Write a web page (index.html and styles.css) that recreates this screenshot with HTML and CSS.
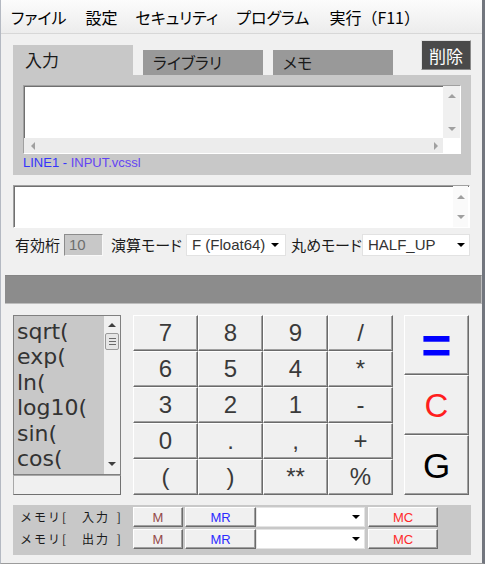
FILE: index.html
```html
<!DOCTYPE html>
<html lang="ja">
<head>
<meta charset="utf-8">
<title>Calculator</title>
<link rel="stylesheet" href="styles.css">
</head>
<body>
<div class="window">
  <div class="menubar">
    <span class="menu m1">ファイル</span>
    <span class="menu m2">設定</span>
    <span class="menu m3">セキュリティ</span>
    <span class="menu m4">プログラム</span>
    <span class="menu m5">実行（F11）</span>
  </div>

  <div class="tabrow">
    <div class="tab active">入力</div>
    <div class="tab">ライブラリ</div>
    <div class="tab">メモ</div>
    <button class="del">削除</button>
  </div>

  <div class="panel">
    <div class="editor">
      <div class="edit-area"></div>
      <div class="vscroll"><i class="arr up"></i><i class="arr down"></i></div>
      <div class="hscroll"><i class="arr left"></i><i class="arr right"></i></div>
      <div class="corner"></div>
    </div>
    <div class="fileline"><span class="l1">LINE1 - </span><span class="l2">INPUT.vcssl</span></div>
  </div>

  <div class="output">
    <div class="edit-area"></div>
    <div class="vscroll out"><i class="arr up"></i><i class="arr down"></i></div>
  </div>

  <div class="settings">
    <span class="lbl l-digits">有効桁</span>
    <span class="digits">10</span>
    <span class="lbl l-mode">演算モード</span>
    <span class="select s-mode">F (Float64)<i class="caret"></i></span>
    <span class="lbl l-round">丸めモード</span>
    <span class="select s-round">HALF_UP<i class="caret"></i></span>
  </div>

  <div class="bar"></div>

  <div class="calc">
    <div class="funcs">
      <div class="flist">
        <div class="items">
          <div>sqrt(</div>
          <div>exp(</div>
          <div>ln(</div>
          <div>log10(</div>
          <div>sin(</div>
          <div>cos(</div>
        </div>
        <div class="lscroll">
          <i class="arr up dark"></i>
          <span class="thumb"></span>
          <i class="arr down dark"></i>
        </div>
      </div>
      <div class="ffield"></div>
    </div>

    <div class="keys">
      <button class="key">7</button>
      <button class="key">8</button>
      <button class="key">9</button>
      <button class="key">/</button>
      <button class="key">6</button>
      <button class="key">5</button>
      <button class="key">4</button>
      <button class="key">*</button>
      <button class="key">3</button>
      <button class="key">2</button>
      <button class="key">1</button>
      <button class="key">-</button>
      <button class="key">0</button>
      <button class="key">.</button>
      <button class="key">,</button>
      <button class="key">+</button>
      <button class="key">(</button>
      <button class="key">)</button>
      <button class="key">**</button>
      <button class="key">%</button>
    </div>

    <div class="side">
      <button class="key big eq">=</button>
      <button class="key big clr">C</button>
      <button class="key big gk">G</button>
    </div>
  </div>

  <div class="memory">
    <div class="mrow">
      <span class="mlabel">メモリ[　入力 ]</span>
      <button class="mb m">M</button>
      <button class="mb mr">MR</button>
      <span class="mselect"><i class="caret"></i></span>
      <button class="mb mc">MC</button>
    </div>
    <div class="mrow">
      <span class="mlabel">メモリ[　出力 ]</span>
      <button class="mb m">M</button>
      <button class="mb mr">MR</button>
      <span class="mselect"><i class="caret"></i></span>
      <button class="mb mc">MC</button>
    </div>
  </div>
</div>
</body>
</html>
```

FILE: styles.css
```css
* { box-sizing: border-box; }

body {
  margin: 0;
  background: #ffffff;
  font-family: "Noto Sans CJK JP", "Liberation Sans", sans-serif;
  color: #000;
}

.window {
  width: 485px;
  height: 564px;
  background: #f0f0f0;
  border-left: 1px solid #b4b9c2;
  border-right: 3px solid #72767e;
  border-bottom: 1px solid #9c9c9c;
  overflow: hidden;
}

/* menu */
.menubar {
  height: 34px;
  border-bottom: 1px solid #d7d7d7;
  background: linear-gradient(#fcfcfc, #ececec);
  display: flex;
  align-items: center;
  padding-left: 10px;
  font-size: 16px;
  line-height: 1;
}
.menu { font-feature-settings: "palt"; }
.m2 { margin-left: 19px; }
.m3 { margin-left: 18px; }
.m4 { margin-left: 18px; }
.m5 { margin-left: 20px; font-feature-settings: normal; }

/* tabs */
.tabrow {
  height: 41px;
  display: flex;
  align-items: flex-end;
  padding: 0 11px 0 12px;
}
.tab {
  width: 120px;
  height: 25px;
  margin-left: 10px;
  padding-left: 10px;
  background: #999999;
  font-size: 16px;
  line-height: 25px;
  color: #1a1a1a;
  font-feature-settings: "palt";
}
.tab.active {
  margin-left: 0;
  height: 30px;
  line-height: 30px;
  padding-left: 12px;
  background: #c8c8c8;
  font-size: 17px;
}
.del {
  margin-left: auto;
  align-self: flex-start;
  margin-top: 6px;
  width: 50px;
  height: 30px;
  padding: 0;
  background: #4a4a4a;
  color: #ffffff;
  font: 17px/1 "Noto Sans CJK JP", sans-serif;
  border: 1px solid;
  border-color: #e0e0e0 #8a8a8a #8a8a8a #e0e0e0;
}

/* input panel */
.panel {
  margin: 0 11px 0 12px;
  height: 100px;
  background: #c8c8c8;
  padding: 10px 0 0 10px;
}
.editor, .output {
  background: #ffffff;
  border: 1px solid;
  border-color: #a0a0a0 #ffffff #ffffff #a0a0a0;
  box-shadow: inset 1px 1px 0 #707070;
  display: grid;
}
.editor {
  width: 438px;
  height: 69px;
  grid-template-columns: 1fr 17px;
  grid-template-rows: 1fr 15px;
}
.vscroll {
  background: #f0f0f0;
  display: flex;
  flex-direction: column;
  align-items: center;
  justify-content: space-between;
  padding: 8px 0 7px;
}
.hscroll {
  background: #ececec;
  display: flex;
  align-items: center;
  justify-content: space-between;
  padding: 0 5px 0 7px;
}
.corner { background: #ffffff; }

.arr { display: block; width: 0; height: 0; border: 4px solid transparent; }
.arr.up { border-bottom: 4px solid #a0a0a0; border-top-width: 0; }
.arr.down { border-top: 4px solid #a0a0a0; border-bottom-width: 0; }
.arr.left { border-right: 4px solid #a0a0a0; border-left-width: 0; }
.arr.right { border-left: 4px solid #a0a0a0; border-right-width: 0; }
.arr.dark.up { border-bottom-color: #404040; }
.arr.dark.down { border-top-color: #404040; }

.fileline {
  font: 13px/16px "Liberation Sans", sans-serif;
  margin-top: 1px;
}
.l1 { color: #3434fc; }
.l2 { color: #6444f4; }

/* output */
.output {
  margin: 10px 11px 0 12px;
  width: 457px;
  height: 43px;
  grid-template-columns: 1fr 16px;
}
.vscroll.out {
  background: #fafafa;
  padding: 9px 0 8px;
  margin-right: 1px;
}

/* settings */
.settings {
  margin-top: 5px;
  height: 23px;
  display: flex;
  align-items: center;
  padding-left: 14px;
  font-size: 15px;
  color: #1a1a1a;
}
.lbl { font-feature-settings: "palt"; line-height: 1; white-space: nowrap; }
.l-digits { width: 49px; }
.digits {
  width: 39px;
  height: 22px;
  background: #c8c8c8;
  border: 1px solid;
  border-color: #8c8c8c #f8f8f8 #f8f8f8 #8c8c8c;
  font: 15px/20px "Liberation Sans", sans-serif;
  color: #6e6e6e;
  padding-left: 4px;
}
.l-mode { margin-left: 8px; width: 75px; }
.l-round { margin-left: 5px; width: 71px; }
.select {
  height: 22px;
  background: #ffffff;
  border: 1px solid #e2e2e2;
  font: 15px/20px "Liberation Sans", sans-serif;
  color: #333333;
  padding-left: 5px;
  display: flex;
  align-items: center;
}
.s-mode { width: 100px; }
.s-round { width: 108px; }
.caret {
  display: block;
  margin-left: auto;
  width: 0; height: 0;
  border-left: 4px solid transparent;
  border-right: 4px solid transparent;
  border-top: 4px solid #000;
}
.s-mode .caret { margin-right: 6px; }
.s-round .caret { margin-right: 4px; }

/* gray bar */
.bar {
  margin: 19px 0 0 4px;
  width: 477px;
  height: 29px;
  background: #8c8c8c;
  border-right: 1px solid #bdbdbd;
  border-bottom: 1px solid #bdbdbd;
  border-top: 1px solid #858585;
}

/* calculator */
.calc {
  margin-top: 11px;
  padding-left: 12px;
  display: flex;
}
.funcs { width: 108px; display: flex; flex-direction: column; }
.flist {
  height: 160px;
  border: 1px solid #808080;
  background: #c8c8c8;
  display: flex;
}
.items {
  flex: 1;
  padding: 3px 0 0 3px;
  font: 22px/25.4px "DejaVu Sans", sans-serif;
  color: #333333;
  overflow: hidden;
}
.lscroll {
  width: 16px;
  background: #f0f0f0;
  display: flex;
  flex-direction: column;
  align-items: center;
  padding: 7px 0 0;
}
.lscroll .arr.down { margin-top: auto; margin-bottom: 8px; }
.thumb {
  margin-top: 6px;
  width: 14px;
  height: 17px;
  background: #e6e6e6;
  border: 1px solid #9a9a9a;
  border-radius: 2px;
  display: flex;
  align-items: center;
  justify-content: center;
}
.thumb::before {
  content: "";
  width: 7px;
  height: 7px;
  background: repeating-linear-gradient(to bottom, #6a6a6a 0 1px, transparent 1px 3px);
}
.ffield {
  height: 20px;
  background: #f0f0f0;
  border: 1px solid;
  border-color: #a8a8a8 #707070 #707070 #a8a8a8;
}

.key {
  margin: 0;
  padding: 0;
  background: #f0f0f0;
  border: 1px solid;
  border-color: #ffffff #6b6b6b #6b6b6b #ffffff;
  box-shadow: inset -1px -1px 0 #a0a0a0;
  font: 24px/1 "Liberation Sans", sans-serif;
  color: #3a3a3a;
}
.keys {
  margin-left: 12px;
  display: grid;
  grid-template-columns: repeat(4, 65px);
  grid-template-rows: repeat(5, 36px);
}
.side {
  margin-left: 11px;
  display: grid;
  grid-template-columns: 65px;
  grid-template-rows: repeat(3, 60px);
}
.eq { font: bold 52px/1 "Liberation Sans", sans-serif; color: #0000ff; }
.clr { font-size: 33px; color: #ff1e1e; }
.gk { font-size: 35px; color: #000000; }

/* memory */
.memory {
  margin: 10px 11px 0 12px;
  height: 50px;
  background: #c8c8c8;
  padding: 2px 0 0 7px;
  display: flex;
  flex-direction: column;
  gap: 2px;
}
.mrow { display: flex; height: 20px; align-items: stretch; }
.mlabel {
  width: 113px;
  font-size: 12px;
  line-height: 20px;
  letter-spacing: 2px;
  word-spacing: 2px;
  color: #1a1a1a;
  white-space: nowrap;
}
.mb {
  margin: 0;
  padding: 0;
  background: #f0f0f0;
  border: 1px solid;
  border-color: #ffffff #6b6b6b #6b6b6b #ffffff;
  box-shadow: inset -1px -1px 0 #a0a0a0;
  font: 13px/1 "Liberation Sans", sans-serif;
}
.mb.m { width: 50px; margin-right: 2px; color: #944a4a; }
.mb.mr { width: 71px; color: #2c2cff; }
.mb.mc { width: 70px; color: #ff2a2a; }
.mselect {
  width: 109px;
  margin-right: 3px;
  background: #ffffff;
  border: 1px solid #e4e4e4;
  display: flex;
  align-items: center;
}
.mselect .caret { margin-right: 4px; }
```
